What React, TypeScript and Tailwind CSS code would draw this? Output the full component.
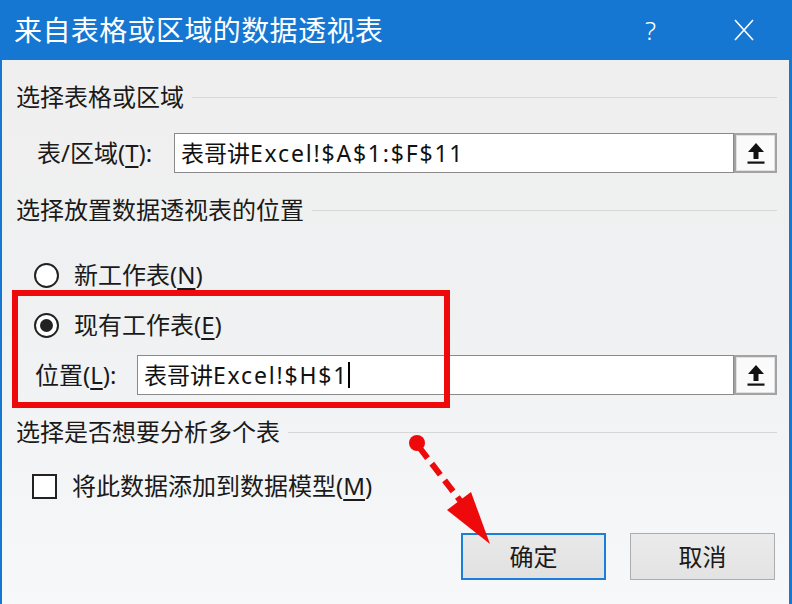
import React from "react";

const FONT = { fontFamily: '"Noto Sans", "Noto Sans CJK SC", sans-serif' };

function UploadBtn() {
  return (
    <div className="w-[43px] h-full border-2 border-[#a3a3a3] bg-[#f4f4f4] flex items-center justify-center shrink-0">
      <div className="w-full h-full border border-[#e0e0e0] bg-[#fafafa] flex items-center justify-center">
        <svg width="20" height="24" viewBox="0 0 20 24">
          <path d="M10 2 L18 11 L12.5 11 L12.5 18 L7.5 18 L7.5 11 L2 11 Z" fill="#111" />
          <rect x="1.5" y="20.5" width="17" height="2.2" fill="#111" />
        </svg>
      </div>
    </div>
  );
}

function Header({ text }: { text: string }) {
  return (
    <div className="flex items-center h-[32px] pl-[14px]">
      <span className="text-[24px] leading-[32px] text-[#1a1a1a] whitespace-nowrap">{text}</span>
      <div className="flex-1 h-px bg-[#d6d6d6] ml-[8px]" />
    </div>
  );
}

function Radio({ checked }: { checked?: boolean }) {
  return (
    <div className="w-[25px] h-[25px] rounded-full border-2 border-[#222] bg-white flex items-center justify-center shrink-0">
      {checked && <div className="w-[13px] h-[13px] rounded-full bg-[#222]" />}
    </div>
  );
}

export default function App() {
  return (
    <div style={FONT} className="relative w-[792px] h-[604px] overflow-hidden bg-[#f0f0f0] flex flex-col">
      {/* Title bar */}
      <div className="h-[60px] bg-[#1677d2] flex items-center pl-[14px] pr-[38px] shrink-0">
        <span className="text-[28px] text-white leading-none tracking-[0.4px]">来自表格或区域的数据透视表</span>
        <span className="ml-auto text-[26px] text-white leading-none font-light mr-[78px]">?</span>
        <svg width="20" height="22" viewBox="0 0 20 22">
          <path d="M1 1 L19 21 M19 1 L1 21" stroke="white" strokeWidth="1.6" />
        </svg>
      </div>

      {/* Body */}
      <div className="flex-1 flex flex-col border-l-2 border-r-[3px] border-[#1677d2] bg-gradient-to-b from-[#efefef] via-[#f0f1f2] to-[#f7f8f9] pr-[12px]">
        <div className="mt-[21px]">
          <Header text="选择表格或区域" />
        </div>

        <div className="mt-[20px] flex items-center h-[40px] pl-[35px]">
          <div className="w-[137px] text-[24px] text-[#1a1a1a] whitespace-nowrap">
            表/区域(<span className="underline underline-offset-4">T</span>):
          </div>
          <div className="flex-1 h-full bg-white border border-[#8a8a8a] flex items-center pl-[6px] text-[23px] text-[#111] whitespace-nowrap">
            <span>表哥讲</span>
            <span className="tracking-[1.8px]">Excel!$A$1:$F$11</span>
          </div>
          <UploadBtn />
        </div>

        <div className="mt-[21px]">
          <Header text="选择放置数据透视表的位置" />
        </div>

        <div className="mt-[33px] flex items-center h-[32px] pl-[32px] gap-[15px]">
          <Radio />
          <span className="text-[24px] text-[#1a1a1a]">
            新工作表(<span className="underline underline-offset-4">N</span>)
          </span>
        </div>

        <div className="mt-[18px] flex items-center h-[32px] pl-[32px] gap-[15px]">
          <Radio checked />
          <span className="text-[24px] text-[#1a1a1a]">
            现有工作表(<span className="underline underline-offset-4">E</span>)
          </span>
        </div>

        <div className="mt-[14px] flex items-center h-[40px] pl-[33px]">
          <div className="w-[102px] text-[24px] text-[#1a1a1a] whitespace-nowrap">
            位置(<span className="underline underline-offset-4">L</span>):
          </div>
          <div className="flex-1 h-full bg-white border border-[#8a8a8a] flex items-center pl-[6px] text-[23px] text-[#111] whitespace-nowrap">
            <span>表哥讲</span>
            <span className="tracking-[1.8px]">Excel!$H$1</span>
            <span className="inline-block w-[1.5px] h-[26px] bg-black" />
          </div>
          <UploadBtn />
        </div>

        <div className="mt-[21px]">
          <Header text="选择是否想要分析多个表" />
        </div>

        <div className="mt-[22px] flex items-center h-[32px] pl-[30px] gap-[15px]">
          <div className="w-[25px] h-[25px] border-2 border-[#222] bg-white shrink-0" />
          <span className="text-[24px] text-[#1a1a1a]">
            将此数据添加到数据模型(<span className="underline underline-offset-4">M</span>)
          </span>
        </div>

        <div className="mt-[31px] flex justify-end gap-[24px] pr-[2px]">
          <button className="w-[145px] h-[47px] border-2 border-[#1a7fd8] bg-gradient-to-b from-[#e9e9e9] to-[#e1e1e1] text-[24px] text-[#1a1a1a]">
            确定
          </button>
          <button className="w-[145px] h-[47px] border border-[#adadad] bg-gradient-to-b from-[#ebebeb] to-[#e3e3e3] text-[24px] text-[#1a1a1a]">
            取消
          </button>
        </div>
      </div>

      {/* Red annotation box */}
      <div className="absolute left-[12px] top-[290px] w-[438px] h-[118px] border-[6px] border-[#ee0a0a] pointer-events-none" />

      {/* Red dashed arrow */}
      <svg className="absolute left-0 top-0 pointer-events-none" width="792" height="604" viewBox="0 0 792 604">
        <circle cx="417" cy="443" r="8" fill="#ee0a0a" />
        <line x1="419" y1="447" x2="462" y2="503" stroke="#ee0a0a" strokeWidth="6" strokeDasharray="14 7" />
        <polygon points="447,510 471,492 490,544" fill="#ee0a0a" />
      </svg>
    </div>
  );
}
